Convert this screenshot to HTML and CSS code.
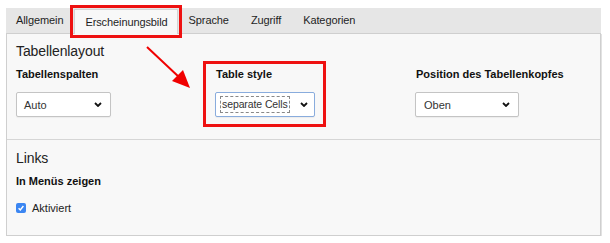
FILE: index.html
```html
<!DOCTYPE html>
<html lang="de">
<head>
<meta charset="utf-8">
<title>Tabelle</title>
<link rel="stylesheet" href="styles.css">
</head>
<body>
<div class="tabs">
  <div class="tab">Allgemein</div>
  <div class="tab active">Erscheinungsbild</div>
  <div class="tab">Sprache</div>
  <div class="tab">Zugriff</div>
  <div class="tab">Kategorien</div>
</div>
<div class="panel">
  <section class="section first">
    <h2 class="heading">Tabellenlayout</h2>
    <div class="grid">
      <div class="field">
        <div class="label">Tabellenspalten</div>
        <div class="select"><span class="value">Auto</span><svg class="chev" viewBox="0 0 8 5" width="8" height="5"><polyline points="1,1 4,4 7,1" fill="none" stroke="#111" stroke-width="1.8"/></svg></div>
      </div>
      <div class="field">
        <div class="hl">
          <div class="label">Table style</div>
          <div class="select focus"><span class="value dashed">separate Cells</span><svg class="chev" viewBox="0 0 8 5" width="8" height="5"><polyline points="1,1 4,4 7,1" fill="none" stroke="#111" stroke-width="1.8"/></svg></div>
        </div>
      </div>
      <div class="field">
        <div class="label">Position des Tabellenkopfes</div>
        <div class="select wide"><span class="value">Oben</span><svg class="chev" viewBox="0 0 8 5" width="8" height="5"><polyline points="1,1 4,4 7,1" fill="none" stroke="#111" stroke-width="1.8"/></svg></div>
      </div>
    </div>
  </section>
  <section class="section second">
    <h2 class="heading">Links</h2>
    <div class="label">In Menüs zeigen</div>
    <label class="check"><span class="box"><svg viewBox="0 0 10 10" width="10" height="10"><polyline points="2.6,5.2 4.3,7 7.4,3" fill="none" stroke="#fff" stroke-width="1.4"/></svg></span>Aktiviert</label>
  </section>
</div>
<svg class="arrow" width="60" height="60" viewBox="0 0 60 60">
  <line x1="7" y1="7" x2="40" y2="38" stroke="#f00000" stroke-width="2"/>
  <polygon points="50,48 32,41 43,30" fill="#f00000"/>
</svg>
</body>
</html>
```
FILE: styles.css
```css
html, body {
  margin: 0;
  background: #ffffff;
}
body {
  padding: 8px 9px 0 6px;
  font-family: "Liberation Sans", Arial, sans-serif;
  font-size: 11px;
  color: #1e1e1e;
  position: relative;
}
.tabs {
  display: flex;
  height: 25px;
  background: #e6e6e6;
}
.tab {
  padding: 0 11px;
  line-height: 25px;
  box-sizing: border-box;
  letter-spacing: -0.1px;
}
.tab:first-child {
  padding-left: 10px;
}
.tab.active {
  background: #f8f8f8;
  margin-top: 1px;
  padding: 0 9px 0 10px;
  line-height: 24px;
  border: 1px solid #d4d4d4;
  border-bottom: none;
  position: relative;
  z-index: 1;
  margin-bottom: -1px;
  height: 25px;
  outline: 3px solid #ee1111;
  outline-offset: 1px;
}
.panel {
  background: #f8f8f8;
  border: 1px solid #cfcfcf;
  box-shadow: 1px 1px 0 #e2e2e2;
}
.section {
  padding: 8px 9px 0 9px;
}
.section.first {
  height: 97px;
  border-bottom: 1px solid #d6d6d6;
}
.section.second {
  height: 86px;
  padding-top: 9px;
}
.heading {
  margin: 0;
  font-size: 14px;
  font-weight: normal;
  line-height: 18px;
  color: #222;
  letter-spacing: -0.1px;
}
.grid {
  display: grid;
  grid-template-columns: 200px 200px 200px;
  margin-top: 7px;
}
.label {
  font-weight: bold;
  line-height: 14px;
  color: #111;
}
.second .label {
  margin-top: 7px;
}
.hl {
  position: relative;
  width: 99px;
}
.hl::before {
  content: "";
  position: absolute;
  left: -13px;
  right: -11px;
  top: -6px;
  bottom: -10px;
  border: 3px solid #ee1111;
  pointer-events: none;
}
.select {
  margin-top: 11px;
  width: 95px;
  height: 25px;
  box-sizing: border-box;
  background: #fff;
  border: 1px solid #c4c4c4;
  border-radius: 2px;
  box-shadow: 0 1px 1px rgba(0,0,0,0.05);
  display: flex;
  align-items: center;
  justify-content: space-between;
  padding: 0 8px 0 7px;
  color: #333;
}
.select.focus {
  width: 100px;
  margin-left: -1px;
  border-color: #89acdd;
  padding-left: 5px;
  padding-right: 6px;
}
.select.wide {
  width: 104px;
  margin-left: -1px;
  padding-left: 8px;
}
.value.dashed {
  outline: 1px dashed #888;
  padding: 1px 1px;
  line-height: 13px;
  font-size: 10.5px;
  letter-spacing: -0.1px;
}
.chev {
  display: block;
}
.check {
  display: flex;
  align-items: center;
  margin-top: 13px;
  line-height: 14px;
  color: #222;
}
.box {
  width: 10px;
  height: 10px;
  border-radius: 2px;
  background: #3b86f2;
  margin-right: 6px;
  display: block;
}
.box svg {
  display: block;
}
.arrow {
  position: absolute;
  left: 140px;
  top: 40px;
}
```
